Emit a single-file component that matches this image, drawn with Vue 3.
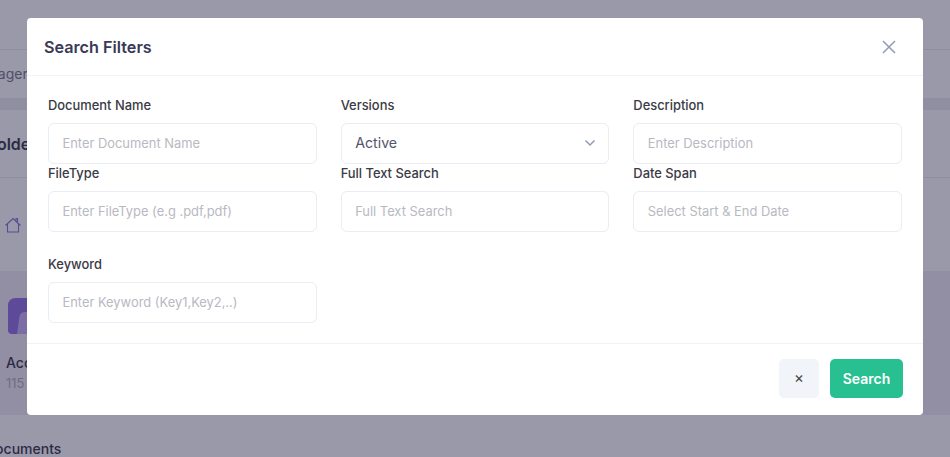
<template>
  <div class="page">
    <div class="topbar"></div>
    <div class="crumbs"><span>Manager</span></div>
    <div class="gap-band"></div>
    <div class="folder-head"><h2>Folder</h2></div>
    <div class="path-row">
      <svg class="home" width="16" height="16" viewBox="0 0 16 16" fill="none" stroke="#5b4a94" stroke-width="1.1">
        <path d="M.5 8.5 8 1.5 15.5 8.5M2.5 7V15H13.5V7M11 3.5V1.5H12.5V5" />
      </svg>
    </div>
    <div class="cards">
      <div class="card">
        <svg class="folder-icon" width="40" height="36" viewBox="0 0 40 36">
          <path d="M8 0H40V36H4Q0 36 0 32V8Q0 0 8 0Z" fill="#5d4a98" />
          <path d="M9 36 11.5 18Q12.5 14 17 14H40V36Z" fill="#7c6da6" />
        </svg>
        <div class="card-name">Accounts</div>
        <div class="card-meta">115 files</div>
      </div>
    </div>
    <div class="docs-title">Documents</div>

    <div class="overlay">
      <div class="modal">
        <div class="modal-header">
          <h3>Search Filters</h3>
          <button class="close" type="button" aria-label="Close">
            <svg width="14" height="14" viewBox="0 0 14 14" fill="none" stroke="#8f9bb3" stroke-width="1.5">
              <path d="M1 1 13 13M13 1 1 13" />
            </svg>
          </button>
        </div>
        <div class="modal-body">
          <div v-for="field in fields" :key="field.label" class="field">
            <label>{{ field.label }}</label>
            <div v-if="field.select" class="select">
              <span>Active</span>
              <svg width="12" height="8" viewBox="0 0 12 8" fill="none" stroke="#8f9bb3" stroke-width="1.5">
                <path d="M1.5 1.5 6 6 10.5 1.5" />
              </svg>
            </div>
            <input v-else type="text" :placeholder="field.placeholder" />
          </div>
        </div>
        <div class="modal-footer">
          <button class="btn-clear" type="button">×</button>
          <button class="btn-search" type="button">Search</button>
        </div>
      </div>
    </div>
  </div>
</template>

<script setup>
const fields = [
  { label: 'Document Name', placeholder: 'Enter Document Name' },
  { label: 'Versions', select: true },
  { label: 'Description', placeholder: 'Enter Description' },
  { label: 'FileType', placeholder: 'Enter FileType (e.g .pdf,pdf)' },
  { label: 'Full Text Search', placeholder: 'Full Text Search' },
  { label: 'Date Span', placeholder: 'Select Start & End Date' },
  { label: 'Keyword', placeholder: 'Enter Keyword (Key1,Key2,..)' }
];
</script>

<style>
html, body {
  margin: 0;
  overflow: hidden;
}
</style>

<style scoped>
.page {
  position: relative;
  width: 950px;
  height: 457px;
  overflow: hidden;
  background: #9a99aa;
  font-family: Inter, "Liberation Sans", sans-serif;
}
.topbar {
  height: 49px;
  border-bottom: 1px solid #8f8ea0;
}
.crumbs {
  height: 48px;
  font-size: 14px;
  line-height: 47px;
  color: #4f4e66;
  margin-left: -31px;
}
.gap-band {
  height: 12px;
  background: #908fa2;
}
.folder-head {
  height: 67px;
  border-bottom: 1px solid #8f8ea0;
  margin-left: -12px;
}
.folder-head h2 {
  margin: 0;
  font-size: 16px;
  font-weight: 600;
  line-height: 68px;
  color: #2c2b44;
}
.path-row {
  height: 93px;
  padding: 39px 0 0 5px;
  box-sizing: border-box;
}
.home {
  display: block;
}
.cards {
  height: 144px;
  background: #928fa5;
  padding: 27px 0 0 8px;
  box-sizing: border-box;
}
.folder-icon {
  display: block;
}
.card-name {
  margin: 19px 0 0 -2px;
  font-size: 14px;
  font-weight: 500;
  line-height: 20px;
  color: #2c2b44;
}
.card-meta {
  margin: 1px 0 0 -2px;
  font-size: 12.9px;
  line-height: 20px;
  color: #6d6c80;
}
.docs-title {
  margin: 25px 0 0 -15px;
  font-size: 14px;
  font-weight: 500;
  line-height: 17px;
  color: #2c2b44;
}
.overlay {
  position: absolute;
  inset: 0;
  padding: 18px 27px 0;
  box-sizing: border-box;
}
.modal {
  height: 397px;
  background: #fff;
  border-radius: 4px;
  display: flex;
  flex-direction: column;
}
.modal-header {
  height: 58px;
  flex: none;
  box-sizing: border-box;
  display: flex;
  align-items: center;
  justify-content: space-between;
  padding: 0 27px 0 17px;
  border-bottom: 1px solid #f1f2f8;
}
.modal-header h3 {
  margin: 0;
  font-size: 16.2px;
  font-weight: 600;
  color: #3a3958;
}
.close {
  display: flex;
  padding: 0;
  border: 0;
  background: none;
}
.modal-body {
  flex: 1;
  display: grid;
  grid-template-columns: repeat(3, 1fr);
  grid-template-rows: 68px 91px 68px;
  column-gap: 24px;
  align-content: start;
  padding: 21px 21px 0;
}
.field {
  display: flex;
  flex-direction: column;
}
.field label {
  height: 26px;
  font-size: 12.9px;
  font-weight: 500;
  line-height: 17px;
  color: #3a3a46;
}
.field input,
.select {
  height: 40.5px;
  flex: none;
  box-sizing: border-box;
  width: 100%;
  padding: 1px 13.5px 0;
  border: 1px solid #eaecf6;
  border-radius: 6px;
  background: #fff;
  font-family: inherit;
  font-size: 12.9px;
  outline: none;
}
.field input::placeholder {
  color: #b9b9c2;
  opacity: 1;
}
.select {
  display: flex;
  align-items: center;
  justify-content: space-between;
  padding: 0 12px 1px 13.5px;
  font-size: 14.2px;
  color: #55556a;
}
.modal-footer {
  height: 72px;
  flex: none;
  display: flex;
  justify-content: flex-end;
  gap: 11px;
  padding: 15px 20px 0 0;
  box-sizing: border-box;
  border-top: 1px solid #f1f2f4;
}
.modal-footer button {
  height: 39px;
  border: 0;
  border-radius: 5px;
  font-family: inherit;
}
.modal-footer .btn-clear {
  width: 40px;
  padding: 0 0 3px;
  background: #f1f4f8;
  color: #444;
  font-size: 15px;
}
.btn-search {
  width: 73px;
  background: #28bf91;
  color: #fff;
  font-size: 14px;
  font-weight: 600;
}
</style>
